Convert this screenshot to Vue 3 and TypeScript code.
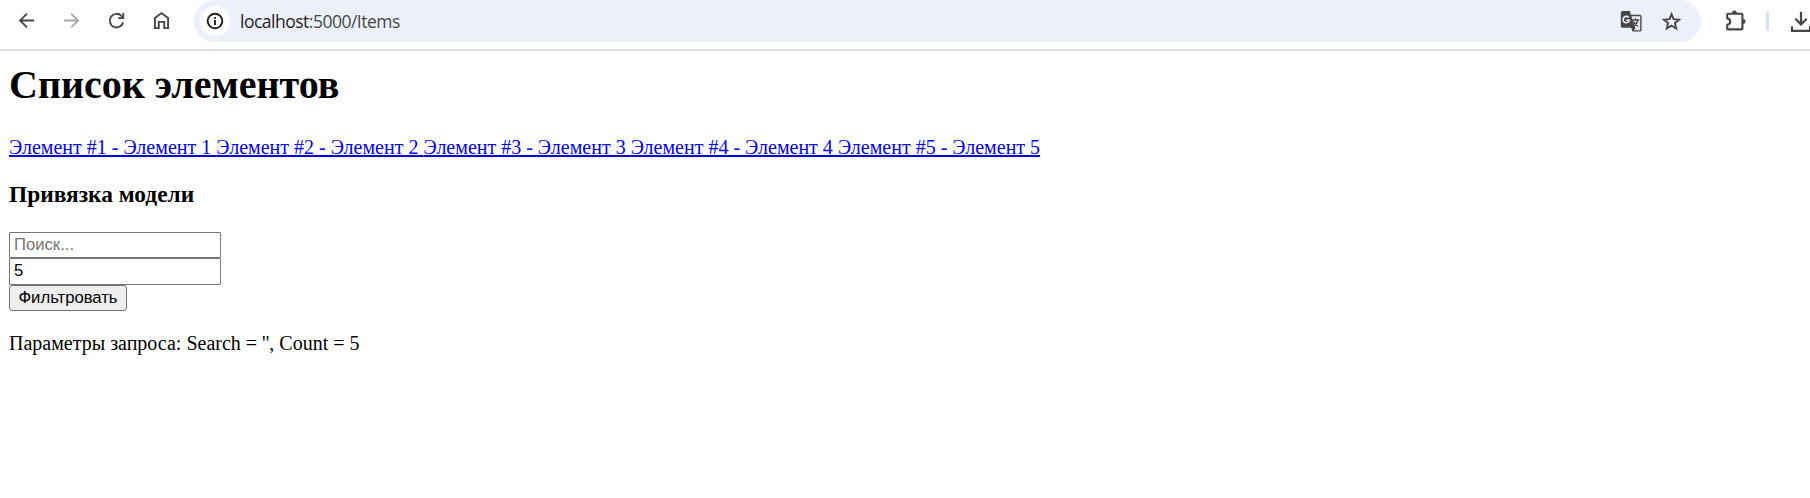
<script setup lang="ts">
import { ref } from 'vue'

interface Item {
  id: number
  name: string
}

const items: Item[] = [1, 2, 3, 4, 5].map((id) => ({ id, name: `Элемент ${id}` }))
const search = ref('')
const count = ref('5')
</script>

<template>
  <div class="window">
    <header class="toolbar">
      <nav class="nav">
        <svg viewBox="0 0 24 24" class="icon"><path d="M19.2 11.5H5M12 4.6l-6.9 6.9 6.9 6.9" /></svg>
        <svg viewBox="0 0 24 24" class="icon muted"><path d="M4 11.5h14.2M11.2 4.6l6.9 6.9-6.9 6.9" /></svg>
        <svg viewBox="0 0 24 24" class="icon"><path d="M18.2 13.2A6.8 6.8 0 1 1 16.4 6.8L18 8.4" /><path class="fill" d="M19.2 4v6h-6V8.2h4.2V4z" /></svg>
        <svg viewBox="0 0 24 24" class="icon"><path d="M4.9 19.1V9L11.5 4.1 18.1 9v10.1h-3.9v-6.2H8.8v6.2z" /></svg>
      </nav>
      <div class="address">
        <span class="info">
          <svg viewBox="0 0 24 24" class="icon dark"><circle cx="12" cy="12" r="7.3" /><path d="M12 11v5M12 8v1.8" /></svg>
        </span>
        <span class="url"><span class="host">localhost</span>:5000/Items</span>
        <svg viewBox="0 0 24 24" class="translate">
          <path class="fill" d="M3.5 2h7.2l1.2 3.8h9a1.7 1.7 0 0 1 1.7 1.7v13.4a1.7 1.7 0 0 1-1.7 1.7h-7.4l-1.3-3.8H3.5A1.7 1.7 0 0 1 1.8 17V3.7A1.7 1.7 0 0 1 3.5 2z" />
          <path class="paper" d="M12.4 7.2h8.8v14h-6.4l2-2.4h-.6z" />
          <path class="g" d="M9.6 8.4A3.2 3.2 0 1 0 10.4 11.2H7.2" />
          <path class="glyph" d="M13.2 11h7M16.5 9.3V11M19 11c-.6 2.7-2.2 4.7-4.3 6M14.5 12.4c.8 2.2 2.5 3.8 4.7 5" />
        </svg>
        <svg viewBox="0 0 24 24" class="icon star"><path d="m12.5 5.2 2.1 5 5.4.5-4.1 3.5 1.3 5.3-4.7-2.8-4.7 2.8 1.3-5.3L5 10.7l5.4-.5z" /></svg>
      </div>
      <svg viewBox="0 0 24 24" class="icon puzzle">
        <path d="M4 4.7h13.6a.8.8 0 0 1 .8.8V19.6a.8.8 0 0 1-.8.8H4a.8.8 0 0 1-.8-.8v-3.8c4-.6 4-5.8 0-6.4V5.5A.8.8 0 0 1 4 4.7z" />
        <path class="fill" d="M8.1 4.4a2.4 2.9 0 0 1 4.8 0zM18.8 10.1a2.7 2.4 0 0 1 0 4.8z" />
      </svg>
      <span class="divider"></span>
      <svg viewBox="0 0 24 24" class="icon download"><path d="M12 1.7v12M6.3 8.7l5.7 5.7 5.7-5.7M3 16.2v4.6h18v-4.6" /></svg>
    </header>
    <main class="page">
      <h1>Список элементов</h1>
      <div class="links"><a v-for="item in items" :key="item.id" href="#">Элемент #{{ item.id }} - {{ item.name }}{{ item.id < items.length ? ' ' : '' }}</a></div>
      <h3>Привязка модели</h3>
      <form @submit.prevent>
        <input v-model="search" type="text" placeholder="Поиск..." />
        <input v-model="count" type="text" class="count" />
        <button type="submit">Фильтровать</button>
      </form>
      <p>Параметры запроса: Search = '{{ search }}', Count = {{ count }}</p>
    </main>
  </div>
</template>

<style>
body {
  margin: 0;
  background: #fff;
}
</style>

<style scoped>
.window {
  height: 498px;
  overflow: hidden;
  background: #fff;
}
.toolbar {
  display: flex;
  align-items: flex-start;
  height: 49px;
  border-bottom: 2px solid #dfdfdf;
}
.nav {
  display: flex;
  flex: none;
  gap: 21px;
  padding: 9px 0 0 15px;
}
.icon {
  display: block;
  flex: none;
  width: 24px;
  height: 24px;
  fill: none;
  stroke: #474747;
  stroke-width: 1.9;
}
.muted {
  stroke: #a9a9a9;
}
.dark {
  stroke: #1f1f1f;
}
.fill {
  fill: #474747;
  stroke: none;
}
.address {
  display: flex;
  flex: none;
  align-items: center;
  box-sizing: border-box;
  width: 1507px;
  height: 42px;
  margin-left: 20px;
  padding-left: 6px;
  border-radius: 21px;
  background: #ecf0fa;
}
.info {
  display: flex;
  align-items: center;
  justify-content: center;
  width: 30px;
  height: 30px;
  border-radius: 50%;
  background: #fff;
}
.url {
  margin-left: 10px;
  font: 17.5px/24px "Open Sans", sans-serif;
  letter-spacing: -0.5px;
  color: #474747;
}
.host {
  color: #1f1f1f;
}
.translate {
  width: 24px;
  height: 24px;
  margin-left: auto;
}
.paper {
  fill: #ecf0fa;
}
.g,
.glyph {
  fill: none;
  stroke: #ecf0fa;
  stroke-width: 1.6;
}
.glyph {
  stroke: #474747;
  stroke-width: 1.4;
}
.star {
  margin: 0 18px 0 16px;
}
.puzzle {
  margin: 9px 0 0 23px;
  stroke-width: 2.1;
}
.divider {
  flex: none;
  width: 3px;
  height: 20px;
  margin: 11px 0 0 18px;
  border-radius: 1.5px;
  background: #d3e3fd;
}
.download {
  margin: 10px 0 0 20px;
  stroke-width: 2.2;
}
.page {
  padding: 11px 9px 0;
  font: 20px/23px "Liberation Serif", "Times New Roman", serif;
  color: #000;
}
h1 {
  margin: 0;
  font-size: 40px;
  line-height: 46px;
}
.links {
  margin-top: 28px;
  white-space: pre-wrap;
}
a {
  color: #0000ee;
  text-decoration: underline;
}
h3 {
  margin: 22px 0 24px;
  font-size: 23.4px;
  line-height: 27px;
}
form {
  display: flex;
  flex-direction: column;
  align-items: flex-start;
}
input {
  box-sizing: border-box;
  width: 212px;
  height: 26px;
  margin: 0;
  padding: 1px 3px 1px 4px;
  border: 1px solid #767676;
  border-radius: 1px;
  background: #fff;
  font: 16.67px/20px "Liberation Sans", Arial, sans-serif;
  color: #000;
  outline: none;
}
.count {
  height: 27px;
  padding-bottom: 2px;
}
input::placeholder {
  color: #757575;
}
button {
  box-sizing: border-box;
  width: 118px;
  height: 26px;
  margin: 0;
  padding: 0;
  border: 1px solid #767676;
  border-radius: 3px;
  background: #efefef;
  font: 16.67px/20px "Liberation Sans", Arial, sans-serif;
  color: #000;
}
p {
  margin: 21px 0 0;
}
</style>
